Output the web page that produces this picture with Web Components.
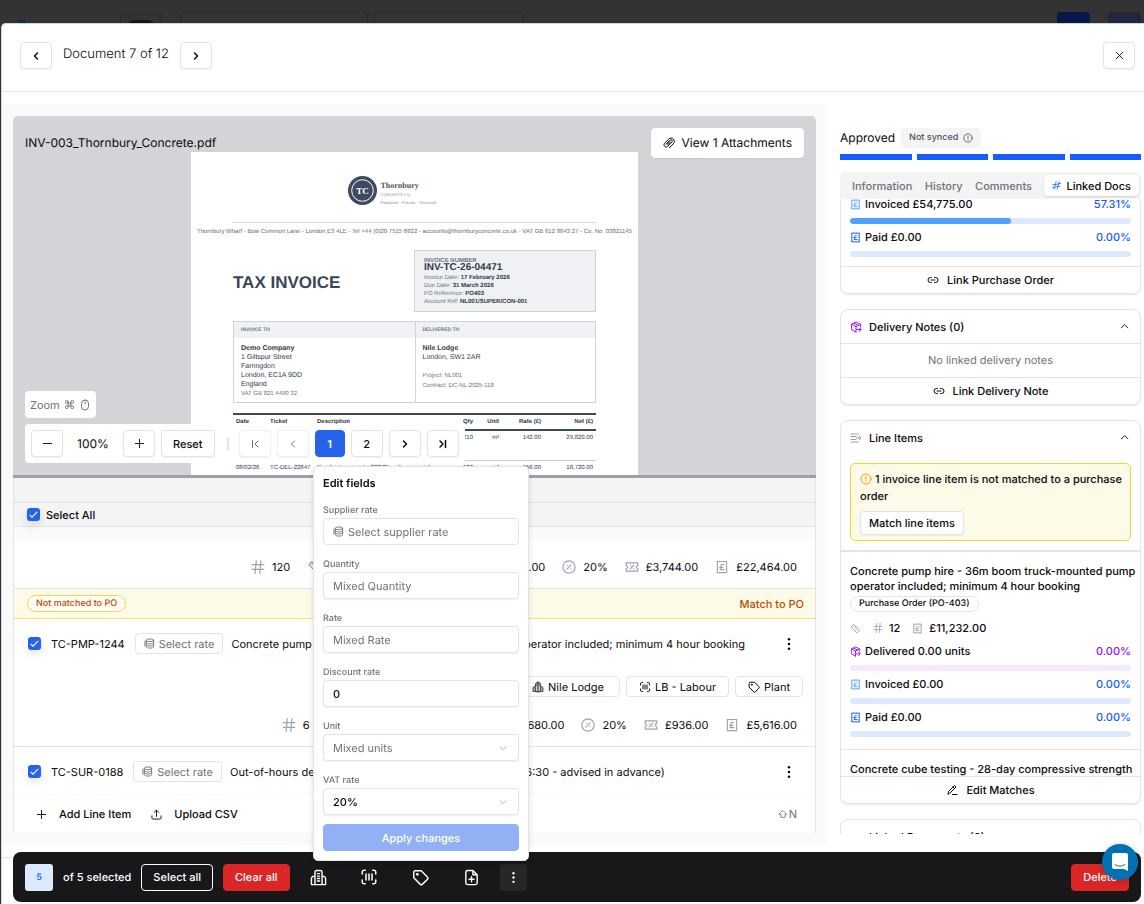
<!DOCTYPE html>
<html lang="en">
<head>
<meta charset="UTF-8" />
<meta name="viewport" content="width=device-width, initial-scale=1" />
<title>Document 7 of 12</title>
<style>
  html, body {
    margin: 0;
    height: 100%;
  }

  body {
    display: flex;
    flex-direction: column;
    overflow: hidden;
    background: #333;
    color: #09090b;
    font-family: Inter, "Liberation Sans", sans-serif;
    font-size: 11px;
    line-height: 16px;
    text-rendering: geometricPrecision;
    --border: #e4e4e7;
    --muted: #71717a;
    --blue: #2563eb;
    --red: #dc2626;
  }
</style>
</head>
<body>
  <app-topbar></app-topbar>
  <document-dialog></document-dialog>
  <bulk-action-bar></bulk-action-bar>
  <edit-fields-popover></edit-fields-popover>
  <chat-launcher></chat-launcher>

<script>
// Icon shapes, all on a 24x24 grid
const ICONS = {
  "chevron-left": '<path d="m15 18-6-6 6-6"/>',
  "chevron-right": '<path d="m9 18 6-6-6-6"/>',
  "chevron-up": '<path d="m5 15 7-7 7 7"/>',
  "chevron-down": '<path d="m5 9 7 7 7-7"/>',
  "page-first": '<path d="m18 18-6-6 6-6M7 5v14"/>',
  "page-last": '<path d="m6 18 6-6-6-6M17 5v14"/>',
  close: '<path d="M19 5 5 19M5 5l14 14"/>',
  minus: '<path d="M3 12h18"/>',
  plus: '<path d="M12 3v18M3 12h18"/>',
  hash: '<path d="M2 8h20M2 16h20M9 1 7 23M17 1l-2 22"/>',
  dots: '<g fill="currentColor" stroke="none"><circle cx="12" cy="4" r="2.2"/><circle cx="12" cy="12" r="2.2"/><circle cx="12" cy="20" r="2.2"/></g>',
  paperclip: '<path d="m7 14 7.500-7.800c1-1 2.600-1 3.500 0s.9 2.500 0 3.500l-8.500 8.800c-1.800 1.800-4.500 1.800-6.200 0s-1.700-4.500 0-6.300L11.500 4c2.600-2.600 6.800-2.600 9.300 0s2.500 6.800 0 9.400L13 21.500"/><path d="m7 14 6-6M9.500 15.500l5-5"/>',
  info: '<circle cx="12" cy="12" r="10"/><path d="M12 7v6M12 16v1"/>',
  link: '<path d="M9 17H7A5 5 0 0 1 7 7h2M15 7h2a5 5 0 0 1 0 10h-2M8 12h8"/>',
  receipt: '<path d="M4 3v18M20 3v18M4 2.500h16M4 21.500h16" stroke-dasharray="2.400 1"/><path d="M15 8.500a2.600 2.600 0 0 0-4.800 1.500v4.500c0 1-.6 2-1.700 2H15.500M8 12.500h5.500"/>',
  box: '<path d="m12 22-9-5v-10.500L12 2l9 4.500V12" stroke-dasharray="5 1.500"/><path d="m3 6.500 9 4.500 9-4.500M12 11v11M7.500 4.300l9 4.500M14 17h8l-3-3M22 17l-3 4"/>',
  lines: '<path d="M2 4h15M2 9h10M2 15h10M2 20h15M13 12h8M18 8l4 4-4 4"/>',
  spark: '<path d="m11 2-5 20M19 2l-5 20M2 10l11-1M15 8l8-2M1 18l8-2M11 15l10-1"/>',
  ruler: '<path d="m3 8 5-5 13 13-5 5zM8 8l2-2M11 11l2-2M14 14l2-2"/>',
  edit: '<path d="m4 20 1-5L17 3l3 3L8 18zM13 21h9M14 6l3 3"/>',
  coins: '<ellipse cx="13" cy="5" rx="8" ry="3"/><path d="M5 5v14c0 1.700 3.600 3 8 3s8-1.300 8-3V5M5 10c0 1.700 3.600 3 8 3s8-1.300 8-3M5 14.500c0 1.700 3.600 3 8 3s8-1.300 8-3M2 7v11"/>',
  percent: '<circle cx="12" cy="12" r="10.500"/><path d="m15.500 8.500-7 7"/><path d="M9 9h.1M15 15h.1"/>',
  ticket: '<path d="M2 5h20v4.500a2.500 2.500 0 0 0 0 5V19H2v-4.500a2.500 2.500 0 0 0 0-5z"/><path d="m15 9-6 6M9 9.500h.1M15 14.500h.1"/>',
  tag: '<path d="M2.500 4.500a2 2 0 0 1 2-2h8.500L22 11.500a2 2 0 0 1 0 2.800L14.500 21.700a2 2 0 0 1-2.800 0L2.500 12.500z"/><circle cx="7.500" cy="7.500" r="1"/>',
  scan: '<path d="M7 3H5.500A2.500 2.500 0 0 0 3 5.500V8M17 3h1.500A2.500 2.500 0 0 1 21 5.500V8M7 21H5.500A2.500 2.500 0 0 1 3 18.500V16M17 21h1.500a2.500 2.500 0 0 0 2.500-2.500V16M8 8v8M12 8v8M16 8v8"/>',
  building: '<path d="M7 22V4.500A2.500 2.500 0 0 1 9.500 2h5A2.500 2.500 0 0 1 17 4.500V22M7 10H6a4 4 0 0 0-4 4v8h20v-8a4 4 0 0 0-4-4h-1M10.500 6.500h3M10.500 10h3M10.500 13.500h3M10.500 17h3"/>',
  lodge: '<g stroke="#52525b"><path d="M7 21V5l3-3h4l3 3v16zM7 10l-5 3v8h20v-8l-5-3" fill="#a1a1aa"/><path d="M10.500 4v16M13.500 4v16"/></g>',
  "file-plus": '<path d="M14 2H6.500A2.500 2.500 0 0 0 4 4.500v15A2.500 2.500 0 0 0 6.500 22h11a2.500 2.500 0 0 0 2.500-2.500V8zM14 2v6h6M12 11v7M8.500 14.500h7"/>',
  upload: '<path d="M12 16V3M7 7.500 12 2.500l5 5M2 15v4.500A2.500 2.500 0 0 0 4.500 22h15a2.500 2.500 0 0 0 2.500-2.500V15"/>',
  command: '<path d="M9 6v12a3 3 0 1 1-3-3h12a3 3 0 1 1-3 3V6a3 3 0 1 1 3 3H6a3 3 0 1 1 3-3z"/>',
  mouse: '<rect x="5" y="2" width="14" height="20" rx="7"/><path d="M12 6v4"/>',
  shift: '<path d="m12 4 9 9h-4v7H7v-7H3z"/>',
};

// Base class: every element writes its styles and markup into an open root
class BaseElement extends HTMLElement {
  constructor() {
    super();
    this.attachShadow({ mode: "open" });
  }

  connectedCallback() {
    this.shadowRoot.innerHTML = `
      <style>
        *, *::before, *::after { box-sizing: border-box; }
        button, input, select { font: inherit; color: inherit; text-rendering: inherit; margin: 0; }
        ${this.styles()}
      </style>
      ${this.render()}
    `;
  }

  attr(name, fallback = "") {
    return this.getAttribute(name) ?? fallback;
  }

  styles() {
    return ":host { display: block; }";
  }

  render() {
    return "<slot></slot>";
  }
}

class UiIcon extends BaseElement {
  styles() {
    return `
      :host { display: inline-flex; flex: none; }
      svg { display: block; overflow: visible; }
    `;
  }

  render() {
    const size = this.attr("size", "12");
    return `
      <svg width="${size}" height="${size}" viewBox="0 0 24 24" fill="none" stroke="currentColor"
        stroke-width="${this.attr("weight", "2")}" stroke-linecap="round" stroke-linejoin="round"
        aria-hidden="true">${ICONS[this.attr("name")]}</svg>
    `;
  }
}

class UiButton extends BaseElement {
  styles() {
    return `
      :host { display: inline-flex; flex: none; }
      button {
        display: inline-flex;
        align-items: center;
        justify-content: center;
        gap: 8px;
        width: 100%;
        min-width: 32px;
        height: 27px;
        padding: 0 11px;
        border: 1px solid var(--border);
        border-radius: 4px;
        background: #fff;
        font-weight: 500;
        white-space: nowrap;
        box-shadow: 0 1px 2px rgba(0, 0, 0, 0.06);
      }
      :host([icon]) button { padding: 0; }
      :host([disabled]) button { color: var(--muted); border-color: #f0f0f2; }
      :host([variant="page"]) button { min-width: 30px; border-color: var(--blue); background: var(--blue); color: #fff; font-weight: 600; }
      :host([variant="large"]) button { height: 30px; font-size: 12px; font-weight: 400; border-color: #fff; gap: 6px; }
      :host([variant="tag"]) button { height: 21px; gap: 4px; padding: 0 12px; box-shadow: none; font-weight: 400; }
      :host([variant="rate"]) button { height: 21px; gap: 4px; padding: 0 8px; box-shadow: none; color: var(--muted); font-weight: 400; }
      :host([variant="plain"]) button { border: 0; background: none; box-shadow: none; padding: 0; }
      :host([variant="small"]) button { height: 24px; padding: 0 8px; }
      :host([variant="outline"]) button { background: none; color: #fff; border-color: #fff; }
      :host([variant="danger"]) button { background: var(--red); border-color: var(--red); color: #fff; }
      :host([variant="primary"]) button { background: #92b1f5; border-color: #92b1f5; color: #fff; box-shadow: none; }
      :host([variant="dark"]) button { min-width: 37px; border: 0; background: none; color: #fff; box-shadow: none; }
      :host([variant="dark-active"]) button { min-width: 27px; border: 0; background: #27272a; color: #fff; box-shadow: none; }
    `;
  }

  render() {
    const label = this.attr("label");
    return `<button type="button" ${label ? `aria-label="${label}"` : ""} ${
      this.hasAttribute("disabled") ? "disabled" : ""
    }><slot></slot></button>`;
  }
}

class UiCheckbox extends BaseElement {
  styles() {
    return `
      :host { display: inline-flex; flex: none; }
      label { display: inline-flex; align-items: center; gap: 6px; font-weight: 500; }
      input {
        appearance: none;
        width: 13px;
        height: 13px;
        border-radius: 3px;
        background: var(--blue);
        box-shadow: 0 4px 8px rgba(0, 0, 0, 0.12);
      }
      .box { display: inline-grid; }
      .box > * { grid-area: 1 / 1; place-self: center; }
      svg { pointer-events: none; }
    `;
  }

  render() {
    return `
      <label>
        <span class="box">
          <input type="checkbox" checked aria-label="${this.attr("label", "Select")}" />
          <svg width="9" height="9" viewBox="0 0 24 24" fill="none" stroke="#fff" stroke-width="3"><path d="m2 13 6 6L22 5"/></svg>
        </span>
        <slot></slot>
      </label>
    `;
  }
}

// Dimmed page that stays visible above the dialog
class AppTopbar extends BaseElement {
  styles() {
    return `
      :host {
        display: flex;
        flex: none;
        align-items: flex-end;
        height: 23px;
        padding: 0 3px 0 18px;
        gap: 12px;
        overflow: hidden;
      }
      .brand { width: 8px; height: 3px; border-radius: 4px 4px 0 0; background: #0c2c50; margin-right: 82px; }
      .box { height: 11px; border: 1px solid #2b2b2b; border-bottom: 0; border-radius: 4px 4px 0 0; }
      .logo { width: 42px; height: 9px; padding: 5px 7px 0; margin-right: 6px; }
      .logo i { display: block; height: 8px; border-radius: 6px 6px 0 0; background: #15161b; }
      .search { width: 188px; }
      .filter { width: 150px; margin-left: -6px; }
      .fill { flex: 1; }
      .primary, .user { width: 33px; height: 11px; border-radius: 4px 4px 0 0; background: #07194a; }
      .user { background: #23263f; margin-left: 6px; }
    `;
  }

  render() {
    return `
      <span class="brand"></span>
      <span class="box logo"><i></i></span>
      <span class="box search"></span>
      <span class="box filter"></span>
      <span class="fill"></span>
      <span class="primary"></span>
      <span class="user"></span>
    `;
  }
}

class DocumentDialog extends BaseElement {
  styles() {
    return `
      :host {
        display: flex;
        flex: 1;
        flex-direction: column;
        min-height: 0;
        margin-left: 1px;
        background: #fff;
        border-left: 1px solid #d4d4d8;
        border-top: 1px solid #d4d4d8;
        border-radius: 5px 0 0 0;
      }
      header {
        display: flex;
        align-items: flex-start;
        height: 68px;
        padding: 18px 9px 0 18px;
        border-bottom: 1px solid var(--border);
        gap: 11px;
      }
      h1 { margin: 0; font-size: 13px; font-weight: 300; line-height: 25px; }
      .close { margin-left: auto; }
      main { display: flex; flex: 1; min-height: 0; padding-top: 12px; }
      .work {
        display: flex;
        flex: 1;
        flex-direction: column;
        min-width: 0;
        padding: 12px 11px;
        background: #fafafa;
      }
      pdf-viewer { flex: 1 1 359px; min-height: 0; }
      .splitter { flex: none; height: 3px; background: #9f9fa9; }
      line-items-panel { flex: 1 1 355px; min-height: 0; }
      linked-docs { flex: none; width: 317px; }
      footer { flex: none; height: 59px; padding-top: 12px; }
      footer::before { content: ""; display: block; border-top: 1px solid var(--border); }
    `;
  }

  render() {
    return `
      <header>
        <ui-button icon label="Previous document"><ui-icon name="chevron-left" weight="3"></ui-icon></ui-button>
        <h1>Document 7 of 12</h1>
        <ui-button icon label="Next document"><ui-icon name="chevron-right" weight="3"></ui-icon></ui-button>
        <ui-button class="close" icon label="Close"><ui-icon name="close" size="11"></ui-icon></ui-button>
      </header>
      <main>
        <section class="work">
          <pdf-viewer></pdf-viewer>
          <div class="splitter"></div>
          <line-items-panel></line-items-panel>
        </section>
        <linked-docs></linked-docs>
      </main>
      <footer></footer>
    `;
  }
}

class PdfViewer extends BaseElement {
  styles() {
    return `
      :host {
        position: relative;
        display: flex;
        flex-direction: column;
        align-items: center;
        overflow: hidden;
        border-radius: 5px 5px 0 0;
        background: #d4d3d8;
      }
      .top {
        display: flex;
        align-self: stretch;
        justify-content: space-between;
        align-items: flex-start;
        flex: none;
        height: 36px;
        padding: 12px 12px 0;
      }
      .name { font-size: 12px; line-height: 30px; }
      invoice-page { flex: none; width: 447px; }
      .tools { position: absolute; left: 12px; bottom: 12px; }
      .hint {
        display: inline-flex;
        align-items: center;
        gap: 4px;
        height: 27px;
        padding: 0 5px;
        margin-bottom: 6px;
        border-radius: 4px;
        background: #fff;
        color: var(--muted);
      }
      .bar {
        display: flex;
        align-items: center;
        gap: 6px;
        padding: 6px;
        border-radius: 4px;
        background: #fff;
      }
      .percent { width: 48px; text-align: center; font-size: 12px; }
      .sep { width: 2px; height: 12px; margin: 0 4px 0 6px; background: var(--border); }
    `;
  }

  render() {
    return `
      <div class="top">
        <span class="name">INV-003_Thornbury_Concrete.pdf</span>
        <ui-button variant="large"><ui-icon name="paperclip" size="12"></ui-icon>View 1 Attachments</ui-button>
      </div>
      <invoice-page></invoice-page>
      <div class="tools">
        <div class="hint">Zoom <ui-icon name="command" size="11"></ui-icon><ui-icon name="mouse" size="12"></ui-icon></div>
        <div class="bar">
          <ui-button icon label="Zoom out"><ui-icon name="minus" size="11"></ui-icon></ui-button>
          <span class="percent">100%</span>
          <ui-button icon label="Zoom in"><ui-icon name="plus" size="11"></ui-icon></ui-button>
          <ui-button>Reset</ui-button>
          <span class="sep"></span>
          <ui-button icon disabled label="First page"><ui-icon name="page-first"></ui-icon></ui-button>
          <ui-button icon disabled label="Previous page"><ui-icon name="chevron-left"></ui-icon></ui-button>
          <ui-button icon variant="page">1</ui-button>
          <ui-button icon>2</ui-button>
          <ui-button icon label="Next page"><ui-icon name="chevron-right" weight="3"></ui-icon></ui-button>
          <ui-button icon label="Last page"><ui-icon name="page-last" weight="3"></ui-icon></ui-button>
        </div>
      </div>
    `;
  }
}

class InvoicePage extends BaseElement {
  styles() {
    return `
      :host {
        display: block;
        min-height: 630px;
        padding: 24px 42px 0;
        background: #fff;
        color: #2f3a4a;
        font-family: "Liberation Sans", Arial, sans-serif;
        font-size: 6px;
        line-height: 8px;
      }
      .brand { display: flex; gap: 4px; width: 134px; margin: 0 auto; }
      .brand b { display: block; font: bold 8px/10px "Liberation Serif", serif; color: #4a5568; padding-top: 5px; }
      .brand small { display: block; font-size: 4px; line-height: 8px; color: #8891a0; }
      .contact {
        display: flex;
        justify-content: center;
        margin-top: 15px;
        padding-top: 5px;
        border-top: 1px solid #d5d9e2;
        white-space: pre;
        color: #5f6b7c;
      }
      .head { display: flex; justify-content: space-between; margin-top: 14px; }
      h2 { margin: 0; font-size: 17px; line-height: 65px; color: #3a4658; }
      .number {
        width: 182px;
        height: 62px;
        padding: 8px 9px;
        border: 1px solid #cfd3dd;
        background: #f0f1f5;
        color: #6b7686;
      }
      .number b { color: #2f3a4a; }
      .number strong { display: block; font-size: 10px; line-height: 8px; margin-bottom: 2px; color: #2f3a4a; }
      .number em { display: block; font-style: normal; font-weight: bold; line-height: 5px; }
      .parties { display: grid; grid-template-columns: 1fr 1fr; margin-top: 6px; border: 1px solid #cfd3dd; }
      .parties > div { height: 80px; font-size: 7px; line-height: 9px; }
      .parties > div + div { border-left: 1px solid #cfd3dd; }
      .parties h3 { margin: 0 0 6px; padding: 0 7px; font-size: 5px; line-height: 16px; background: #f0f1f5; color: #6b7686; }
      .parties p { margin: 0; padding: 0 7px; }
      .parties i { font-style: normal; font-size: 6px; color: #6b7686; }
      table { width: 100%; margin-top: 10px; border-collapse: collapse; table-layout: fixed; border-top: 2px solid #3a4a5c; }
      th, td { padding: 3px; text-align: left; vertical-align: top; white-space: nowrap; }
      th { height: 14px; border-bottom: 2px solid #3a4a5c; }
      td { height: 30px; border-bottom: 1px solid #c5cad3; }
      .r { text-align: right; }
    `;
  }

  render() {
    return `
      <div class="brand">
        <svg width="29" height="29" viewBox="0 0 29 29">
          <circle cx="14.500" cy="14.500" r="14.500" fill="#3d4a5f"/>
          <circle cx="14.500" cy="14.500" r="10.800" fill="none" stroke="#fff"/>
          <text x="14.500" y="18" text-anchor="middle" font-family="Liberation Serif, serif" font-size="9" font-weight="bold" fill="#fff">TC</text>
        </svg>
        <div><b>Thornbury</b><small>CONCRETE CO.</small><small>Readymix - Precast - Structural</small></div>
      </div>
      <div class="contact">Thornbury Wharf - Bow Common Lane - London E3 4LE - Tel +44 (0)20 7515 8822 - accounts@thornburyconcrete.co.uk - VAT GB 612 8843 27 - Co. No. 03821145</div>
      <div class="head">
        <h2>TAX INVOICE</h2>
        <div class="number">
          <em>INVOICE NUMBER</em>
          <strong>INV-TC-26-04471</strong>
          Invoice Date: <b>17 February 2026</b><br />
          Due Date: <b>31 March 2026</b><br />
          PO Reference: <b>PO403</b><br />
          Account Ref: <b>NL001/SUPER/CON-001</b>
        </div>
      </div>
      <div class="parties">
        <div>
          <h3>INVOICE TO</h3>
          <p><b>Demo Company</b><br />1 Giltspur Street<br />Farringdon<br />London, EC1A 9DD<br />England<br /><i>VAT GB 821 4490 32</i></p>
        </div>
        <div>
          <h3>DELIVERED TO</h3>
          <p><b>Nile Lodge</b><br />London, SW1 2AR<br /><br /><i>Project: NL001</i><br /><i>Contract: DC-NL-2025-118</i></p>
        </div>
      </div>
      <table>
        <colgroup>
          <col style="width: 34px" /><col style="width: 47px" /><col />
          <col style="width: 31px" /><col style="width: 26px" /><col style="width: 42px" /><col style="width: 52px" />
        </colgroup>
        <thead>
          <tr><th>Date</th><th>Ticket</th><th>Description</th><th class="r">Qty</th><th class="r">Unit</th><th class="r">Rate (£)</th><th class="r">Net (£)</th></tr>
        </thead>
        <tbody>
          <tr><td></td><td></td><td></td><td class="r">210</td><td class="r">m³</td><td class="r">142.00</td><td class="r">29,820.00</td></tr>
          <tr><td>08/02/26</td><td>TC-DEL-22847</td><td>Readymix concrete C28/35 - pile caps and</td><td class="r">120</td><td class="r">m³</td><td class="r">156.00</td><td class="r">18,720.00</td></tr>
        </tbody>
      </table>
    `;
  }
}

class LineItemsPanel extends BaseElement {
  styles() {
    return `
      :host {
        display: flex;
        flex-direction: column;
        border: 1px solid var(--border);
        border-width: 0 1px;
        background: #fafafa;
      }
      .strip { flex: none; height: 25px; background: #f4f4f5; border-bottom: 1px solid var(--border); }
      .all {
        display: flex;
        flex: none;
        align-items: center;
        height: 24px;
        padding: 0 13px;
        background: #f4f4f5;
        border-bottom: 1px solid var(--border);
      }
      .list { flex: 1; min-height: 0; margin-top: 12px; overflow: hidden; background: #fff; }
      .warn {
        display: flex;
        align-items: center;
        justify-content: space-between;
        height: 30px;
        padding: 0 11px 0 13px;
        background: #fefae8;
        border-bottom: 1px solid #fde272;
        color: #bb4d00;
      }
      .badge {
        height: 17px;
        padding: 0 8px;
        border: 1px solid #fcd34d;
        border-radius: 9px;
        background: #fffdf5;
        font-size: 9px;
        font-weight: 500;
        line-height: 15px;
      }
      .warn a { color: inherit; font-weight: 500; text-decoration: none; }
      .foot {
        display: flex;
        flex: none;
        align-items: center;
        gap: 20px;
        height: 39px;
        padding: 0 18px 0 22px;
        background: #fff;
        border-top: 1px solid #fafafa;
      }
      .foot ui-icon { margin-right: 4px; }
      .key { display: flex; align-items: center; gap: 1px; margin-left: auto; color: var(--muted); }
      .key ui-icon { margin: 0; }
    `;
  }

  render() {
    return `
      <div class="strip"></div>
      <div class="all"><ui-checkbox label="Select All">Select All</ui-checkbox></div>
      <div class="list">
        <line-item qty="120" unit="Cubic m" rate="£156.00" net="£18,720.00" vat="£3,744.00" total="£22,464.00"></line-item>
        <div class="warn"><span class="badge">Not matched to PO</span><a href="#match">Match to PO</a></div>
        <line-item code="TC-PMP-1244" tags qty="6" unit="Per hour" rate="£780.00" net="£4,680.00" vat="£936.00" total="£5,616.00"
          text="Concrete pump hire - 36m boom truck-mounted pump operator included; minimum 4 hour booking"></line-item>
        <line-item code="TC-SUR-0188"
          text="Out-of-hours delivery surcharge (Sat pour, start before 06:30 - advised in advance)"></line-item>
      </div>
      <div class="foot">
        <ui-button variant="plain"><ui-icon name="plus" size="11" weight="2"></ui-icon>Add Line Item</ui-button>
        <ui-button variant="plain"><ui-icon name="upload" size="11"></ui-icon>Upload CSV</ui-button>
        <span class="key"><ui-icon name="shift" size="10"></ui-icon>N</span>
      </div>
    `;
  }
}

class LineItem extends BaseElement {
  styles() {
    return `
      :host { display: block; border-bottom: 1px solid var(--border); }
      :host(:last-child) { padding-bottom: 14px; }
      .row { display: flex; align-items: center; padding: 14px 19px 0 14px; }
      .row ui-checkbox { margin-right: 10px; }
      .row ui-button { margin: 0 8px 0 10px; }
      .row .more { margin: 0 0 0 auto; }
      .more button { display: flex; padding: 0; border: 0; background: none; }
      .text { white-space: nowrap; }
      .tags { display: flex; justify-content: flex-end; gap: 6px; padding: 22px 12px 0; }
      .metrics {
        display: flex;
        align-items: center;
        justify-content: flex-end;
        gap: 17px;
        height: 49px;
        padding: 7px 18px 0;
      }
      .metrics span { display: flex; align-items: center; gap: 7px; white-space: nowrap; }
      .metrics ui-icon { color: #9ca3af; }
    `;
  }

  render() {
    return `
      ${this.hasAttribute("code") ? this.renderHead() : ""}
      ${this.hasAttribute("tags") ? this.renderTags() : ""}
      ${this.hasAttribute("qty") ? this.renderMetrics() : ""}
    `;
  }

  renderHead() {
    return `
      <div class="row">
        <ui-checkbox label="Select ${this.attr("code")}"></ui-checkbox>
        <span>${this.attr("code")}</span>
        <ui-button variant="rate"><ui-icon name="coins" size="11"></ui-icon>Select rate</ui-button>
        <span class="text">${this.attr("text")}</span>
        <span class="more"><button type="button" aria-label="More"><ui-icon name="dots" size="14"></ui-icon></button></span>
      </div>
    `;
  }

  renderTags() {
    return `
      <div class="tags">
        <ui-button variant="tag" style="width: 104px"><ui-icon name="lodge"></ui-icon>Nile Lodge</ui-button>
        <ui-button variant="tag"><ui-icon name="scan"></ui-icon>LB - Labour</ui-button>
        <ui-button variant="tag"><ui-icon name="tag"></ui-icon>Plant</ui-button>
      </div>
    `;
  }

  renderMetrics() {
    const items = [
      ["hash", this.attr("qty")],
      ["ruler", this.attr("unit")],
      ["receipt", this.attr("rate")],
      ["receipt", this.attr("net")],
      ["percent", "20%"],
      ["ticket", this.attr("vat")],
      ["receipt", this.attr("total")],
    ];
    return `<div class="metrics">${items
      .map(([icon, text]) => `<span><ui-icon name="${icon}" size="14"></ui-icon>${text}</span>`)
      .join("")}</div>`;
  }
}

class ProgressRow extends BaseElement {
  styles() {
    return `
      :host { display: block; height: 33px; }
      .label { display: flex; align-items: center; gap: 4px; }
      b { margin-left: auto; font-weight: 500; }
      ui-icon, b { color: #155dfc; }
      :host([tone="light"]) ui-icon { color: #51a2ff; }
      :host([tone="purple"]) ui-icon, :host([tone="purple"]) b { color: #9810fa; }
      .track { height: 6px; margin-top: 6px; border-radius: 3px; background: #dbeafe; overflow: hidden; }
      .track i { display: block; height: 100%; border-radius: 3px; background: #51a2ff; }
      :host([tone="purple"]) .track { background: #f3e8ff; }
    `;
  }

  render() {
    const value = this.attr("value", "0.00%");
    return `
      <div class="label"><ui-icon name="${this.attr("icon", "receipt")}" size="11"></ui-icon><slot></slot><b>${value}</b></div>
      <div class="track"><i style="width: ${value}"></i></div>
    `;
  }
}

class DocCard extends BaseElement {
  styles() {
    return `
      :host {
        display: block;
        border: 1px solid var(--border);
        border-radius: 8px;
        box-shadow: 0 1px 2px rgba(0, 0, 0, 0.1);
        font-weight: 500;
      }
      .title { display: flex; align-items: center; gap: 7px; height: 33px; padding: 0 10px 0 9px; }
      .title ui-icon:last-child { margin-left: auto; }
      .action { display: flex; height: 27px; align-items: center; justify-content: center; border-top: 1px solid var(--border); }
      .tone { color: var(--tone, #9f9fa9); }
    `;
  }

  render() {
    const title = this.attr("heading");
    const action = this.attr("action");
    return `
      ${title ? `<div class="title"><ui-icon class="tone" name="${this.attr("icon")}"></ui-icon>${title}<ui-icon name="chevron-up" size="11"></ui-icon></div>` : ""}
      <slot></slot>
      ${action ? `<div class="action"><ui-button variant="plain"><ui-icon name="${this.attr("action-icon", "link")}" size="12" weight="2"></ui-icon>${action}</ui-button></div>` : ""}
    `;
  }
}

class LinkedDocs extends BaseElement {
  styles() {
    return `
      :host { display: flex; flex-direction: column; padding: 24px 3px 11px 13px; }
      .status { display: flex; align-items: center; gap: 6px; font-size: 12px; }
      .sync {
        display: flex;
        align-items: center;
        gap: 5px;
        height: 20px;
        padding: 0 8px;
        border-radius: 5px;
        background: #f4f4f5;
        color: #52525b;
        font-size: 9px;
        font-weight: 500;
      }
      .steps { display: grid; grid-template-columns: repeat(4, 1fr); gap: 5px; margin: 6px 0 12px; }
      .steps i { height: 6px; background: #155dfc; }
      .tabs {
        display: flex;
        flex: none;
        align-items: center;
        justify-content: space-between;
        height: 27px;
        padding: 0 2px 0 12px;
        border-radius: 6px 6px 0 0;
        background: #f4f4f5;
      }
      .tabs button { height: 21px; padding: 0; border: 0; background: none; color: var(--muted); font-weight: 500; }
      .tabs button.active {
        display: flex;
        align-items: center;
        gap: 5px;
        padding: 0 8px;
        border-radius: 4px;
        background: #fff;
        color: #09090b;
        box-shadow: 0 1px 2px rgba(0, 0, 0, 0.15);
      }
      .active ui-icon { color: #155dfc; }
      .scroll { flex: 1; min-height: 0; overflow: hidden; }
      .cards { display: flex; flex-direction: column; gap: 15px; margin-top: -4px; padding-bottom: 4px; }
      .bars { padding: 0 9px; }
      .bars.first { height: 70px; }
      .empty { border-top: 1px solid var(--border); text-align: center; line-height: 33px; font-weight: 400; color: var(--muted); }
      .alert {
        margin: 9px 9px 9px;
        padding: 7px 3px 5px 9px;
        border: 1px solid #fcd02f;
        border-radius: 5px;
        background: #fefae8;
        line-height: 17px;
      }
      .alert ui-icon { color: #fe9a00; vertical-align: -2px; margin-right: 3px; }
      .alert ui-button { margin-top: 6px; }
      .match { border-top: 2px solid var(--border); padding-top: 12px; }
      .match p { margin: 0; padding: 0 2px 0 9px; line-height: 15px; }
      .po {
        display: inline-block;
        height: 16px;
        margin: 1px 9px 0;
        padding: 0 8px;
        border: 1px solid var(--border);
        border-radius: 8px;
        font-size: 9px;
        line-height: 14px;
      }
      .qty { display: flex; align-items: center; gap: 6px; height: 16px; margin: 8px 9px 7px; }
      .qty ui-icon { color: #9ca3af; }
      .qty ui-icon + ui-icon { margin-left: 6px; }
      .next { height: 27px; padding: 12px 2px 0 9px; border-top: 1px solid var(--border); line-height: 15px; overflow: hidden; white-space: nowrap; }
      .match .bars { height: 106px; }
    `;
  }

  render() {
    return `
      <div class="status">Approved <span class="sync">Not synced <ui-icon name="info" size="10"></ui-icon></span></div>
      <div class="steps"><i></i><i></i><i></i><i></i></div>
      <div class="tabs" role="tablist">
        <button type="button" role="tab">Information</button>
        <button type="button" role="tab">History</button>
        <button type="button" role="tab">Comments</button>
        <button type="button" role="tab" class="active" aria-selected="true"><ui-icon name="spark" size="9"></ui-icon>Linked Docs</button>
      </div>
      <div class="scroll">
        <div class="cards">
          <doc-card action="Link Purchase Order">
            <div class="bars first">
              <progress-row tone="light" value="57.31%">Invoiced £54,775.00</progress-row>
              <progress-row>Paid £0.00</progress-row>
            </div>
          </doc-card>
          <doc-card heading="Delivery Notes (0)" icon="box" action="Link Delivery Note" style="--tone: #9810fa">
            <div class="empty">No linked delivery notes</div>
          </doc-card>
          <doc-card heading="Line Items" icon="lines" action="Edit Matches" action-icon="edit">
            <div class="alert">
              <ui-icon name="info"></ui-icon>1 invoice line item is not matched to a purchase order<br />
              <ui-button variant="small">Match line items</ui-button>
            </div>
            <div class="match">
              <p>Concrete pump hire - 36m boom truck-mounted pump operator included; minimum 4 hour booking</p>
              <span class="po">Purchase Order (PO-403)</span>
              <div class="qty">
                <ui-icon name="ruler" size="11"></ui-icon><ui-icon name="hash" size="10"></ui-icon>12
                <ui-icon name="receipt" size="11"></ui-icon>£11,232.00
              </div>
              <div class="bars">
                <progress-row tone="purple" icon="box">Delivered 0.00 units</progress-row>
                <progress-row tone="light">Invoiced £0.00</progress-row>
                <progress-row>Paid £0.00</progress-row>
              </div>
            </div>
            <div class="next">Concrete cube testing - 28-day compressive strength</div>
          </doc-card>
          <doc-card heading="Linked Documents (0)" icon="link"></doc-card>
        </div>
      </div>
    `;
  }
}

// One labelled control of the bulk edit form
class FormField extends BaseElement {
  styles() {
    return `
      :host { display: block; }
      label { display: block; font-size: 9px; line-height: 15px; color: var(--muted); font-weight: 500; }
      .control { display: grid; align-items: center; }
      .control > * { grid-area: 1 / 1; }
      input, select, button {
        appearance: none;
        width: 100%;
        height: 27px;
        padding: 0 9px;
        border: 1px solid var(--border);
        border-radius: 4px;
        background: #fff;
        box-shadow: 0 1px 2px rgba(0, 0, 0, 0.06);
        text-align: left;
      }
      select, input { font-weight: 500; }
      button { display: flex; align-items: center; gap: 4px; color: var(--muted); box-shadow: none; }
      input::placeholder { color: var(--muted); font-weight: 400; opacity: 1; }
      :host([mixed]) select { color: var(--muted); font-weight: 400; }
      .control > ui-icon { justify-self: end; margin-right: 11px; color: #a1a1aa; pointer-events: none; }
    `;
  }

  render() {
    return `
      <label for="control">${this.attr("label")}</label>
      <div class="control">${this.renderControl()}</div>
    `;
  }

  renderControl() {
    const value = this.attr("value");
    switch (this.attr("kind")) {
      case "picker":
        return `<button id="control" type="button"><ui-icon name="coins" size="11"></ui-icon>${value}</button>`;
      case "select":
        return `<select id="control"><option>${value}</option></select><ui-icon name="chevron-down" size="10"></ui-icon>`;
      default:
        return `<input id="control" type="text" value="${value}" placeholder="${this.attr("placeholder")}" />`;
    }
  }
}

class EditFieldsPopover extends BaseElement {
  styles() {
    return `
      :host {
        position: fixed;
        left: 313px;
        bottom: 43px;
        width: 216px;
        padding: 9px;
        border: 1px solid var(--border);
        border-radius: 5px;
        background: #fff;
        box-shadow: 0 2px 6px rgba(0, 0, 0, 0.12);
        box-sizing: border-box;
      }
      form { display: grid; gap: 12px; }
      h2 { margin: 0; font-size: 11px; line-height: 15px; font-weight: 600; }
      ui-button { margin-top: 9px; width: 100%; }
    `;
  }

  render() {
    return `
      <form>
        <h2>Edit fields</h2>
        <form-field kind="picker" label="Supplier rate" value="Select supplier rate"></form-field>
        <form-field label="Quantity" placeholder="Mixed Quantity"></form-field>
        <form-field label="Rate" placeholder="Mixed Rate"></form-field>
        <form-field label="Discount rate" value="0"></form-field>
        <form-field kind="select" mixed label="Unit" value="Mixed units"></form-field>
        <form-field kind="select" label="VAT rate" value="20%"></form-field>
      </form>
      <ui-button variant="primary">Apply changes</ui-button>
    `;
  }
}

class BulkActionBar extends BaseElement {
  styles() {
    return `
      :host {
        position: fixed;
        left: 13px;
        right: 3px;
        bottom: 2px;
        display: flex;
        align-items: center;
        gap: 10px;
        height: 50px;
        padding: 0 12px;
        border-radius: 8px;
        background: #18181b;
        color: #fff;
        font-weight: 500;
        box-sizing: border-box;
      }
      input {
        width: 28px;
        height: 27px;
        padding: 0;
        border: 0;
        border-radius: 3px;
        background: #dbeafe;
        color: #155dfc;
        font-size: 9px;
        font-weight: 600;
        text-align: center;
      }
      .icons { display: flex; gap: 14px; }
      .delete { margin-left: auto; }
    `;
  }

  render() {
    return `
      <input type="text" value="5" aria-label="Selected items" />
      <span>of 5 selected</span>
      <ui-button variant="outline">Select all</ui-button>
      <ui-button variant="danger">Clear all</ui-button>
      <div class="icons">
        <ui-button icon variant="dark" label="Project"><ui-icon name="building" size="17"></ui-icon></ui-button>
        <ui-button icon variant="dark" label="Cost code"><ui-icon name="scan" size="18"></ui-icon></ui-button>
        <ui-button icon variant="dark" label="Tag"><ui-icon name="tag" size="17"></ui-icon></ui-button>
        <ui-button icon variant="dark" label="Add file"><ui-icon name="file-plus" size="17"></ui-icon></ui-button>
      </div>
      <ui-button icon variant="dark-active" label="More actions"><ui-icon name="dots" size="13"></ui-icon></ui-button>
      <ui-button class="delete" variant="danger">Delete</ui-button>
    `;
  }
}

class ChatLauncher extends BaseElement {
  styles() {
    return `
      :host { position: fixed; right: 6px; bottom: 24px; }
      button {
        display: grid;
        place-items: center;
        width: 36px;
        height: 36px;
        padding: 0;
        border: 0;
        border-radius: 50%;
        background: #0071b2;
        box-shadow: 0 1px 6px rgba(0, 0, 0, 0.2);
      }
    `;
  }

  render() {
    return `
      <button type="button" aria-label="Open chat">
        <svg width="16" height="18" viewBox="0 0 16 18">
          <path d="M2 0h12a2 2 0 0 1 2 2v16l-4-2H2a2 2 0 0 1-2-2V2a2 2 0 0 1 2-2z" fill="#fff"/>
          <path d="M3 11.500c3 2.200 7 2.200 10 0" fill="none" stroke="#0071b2" stroke-linecap="round"/>
        </svg>
      </button>
    `;
  }
}

customElements.define("ui-icon", UiIcon);
customElements.define("ui-button", UiButton);
customElements.define("ui-checkbox", UiCheckbox);
customElements.define("app-topbar", AppTopbar);
customElements.define("invoice-page", InvoicePage);
customElements.define("pdf-viewer", PdfViewer);
customElements.define("line-item", LineItem);
customElements.define("line-items-panel", LineItemsPanel);
customElements.define("progress-row", ProgressRow);
customElements.define("doc-card", DocCard);
customElements.define("linked-docs", LinkedDocs);
customElements.define("form-field", FormField);
customElements.define("document-dialog", DocumentDialog);
customElements.define("edit-fields-popover", EditFieldsPopover);
customElements.define("bulk-action-bar", BulkActionBar);
customElements.define("chat-launcher", ChatLauncher);
</script>
</body>
</html>
